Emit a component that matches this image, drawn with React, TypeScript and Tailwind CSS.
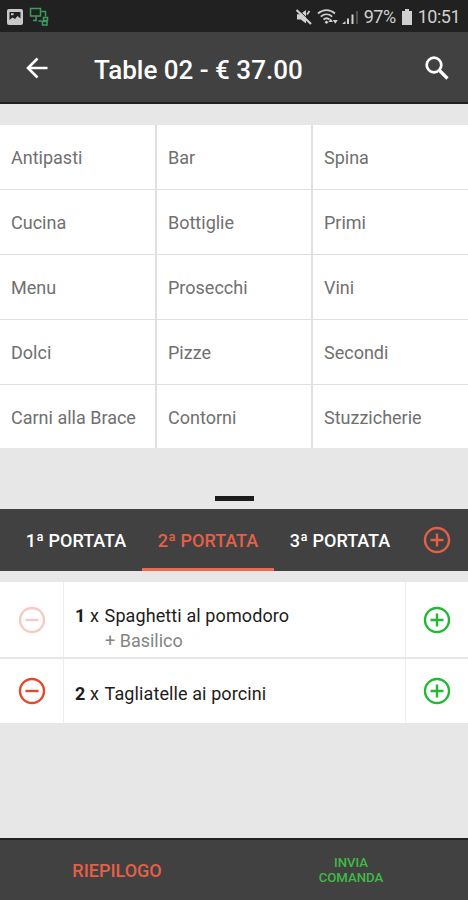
import React, { useState } from 'react';

const CATEGORIES = [
  'Antipasti', 'Bar', 'Spina',
  'Cucina', 'Bottiglie', 'Primi',
  'Menu', 'Prosecchi', 'Vini',
  'Dolci', 'Pizze', 'Secondi',
  'Carni alla Brace', 'Contorni', 'Stuzzicherie',
];

const COURSES = ['1ª PORTATA', '2ª PORTATA', '3ª PORTATA'];

interface OrderItem {
  id: number;
  quantity: number;
  name: string;
  extra?: string;
  locked?: boolean;
}

const ORDER_ITEMS: OrderItem[] = [
  { id: 1, quantity: 1, name: 'Spaghetti al pomodoro', extra: '+ Basilico', locked: true },
  { id: 2, quantity: 2, name: 'Tagliatelle ai porcini' },
];

const CircleIcon: React.FC<{ plus?: boolean; className?: string }> = ({ plus, className }) => (
  <svg viewBox="0 0 28 28" fill="none" stroke="currentColor" strokeWidth="2.4" className={`w-7 h-7 ${className ?? ''}`}>
    <circle cx="14" cy="14" r="12" />
    <path d={plus ? 'M7.5 14h13M14 7.5v13' : 'M7.5 14h13'} />
  </svg>
);

const StatusBar = () => (
  <div className="h-8 bg-[#212121] flex items-center justify-between pl-[7px] pr-2 pt-0.5 text-[#cfcfcf]">
    <div className="flex items-center gap-1.5">
      <svg viewBox="0 0 16 16" className="w-4 h-4">
        <rect width="16" height="16" rx="2" fill="#c8c8c8" />
        <path d="M2.5 3h11v6.5L10.5 7 8 10 5.5 8.5l-3 2.5z" fill="#212121" />
        <path d="M4 4.2h2.6v2H4z" fill="#c8c8c8" />
      </svg>
      <svg viewBox="0 0 20 20" fill="none" stroke="#3f9a60" strokeWidth="1.5" className="w-5 h-5">
        <path d="M1.5 1.5h10V9h-10zM7 9v4.500M4 13.500h4M12.500 4.500h4v5M9.500 14h3.500" />
        <path d="M14.500 10.500h4v3h-4zM13.500 14.500h4.500v3.500h-4.500z" />
      </svg>
    </div>
    <div className="flex items-center">
      <svg viewBox="0 0 16 16" className="w-4 h-4 mr-[5px]">
        <path d="M1 5.2h3.2L10 1v13.5L4.8 10.5H1z" fill="currentColor" />
        <path d="M11 5.500l2.500-3.500" stroke="currentColor" strokeWidth="1.8" />
        <path d="M1.800 0L16 14" stroke="#212121" strokeWidth="1" />
        <path d="M.5 1L15 15" stroke="currentColor" strokeWidth="2.200" />
      </svg>
      <svg viewBox="0 0 22 16" fill="none" stroke="currentColor" strokeWidth="1.8" className="w-[22px] h-4 mr-0.5">
        <path d="M1 4.5C6 0 13 0 18 4.5M3.8 7.6c3.4-3 8-3 11.4 0M6.5 10.5c1.9-1.6 4.1-1.6 6 0" />
        <path d="M9.5 11.5l2 1.7L9.500 15l-2-1.800z" fill="currentColor" stroke="none" />
        <path d="M11.5 13l2.200-3.500 2.300 3.500zM15.800 11h5l-2.500 3.700z" fill="currentColor" stroke="none" />
      </svg>
      <svg viewBox="0 0 18 16" className="w-[18px] h-4 mr-[5px]">
        <path d="M1 15l3.500-3v3zM6 9.500h2V15H6zM10.500 5.500h2V15h-2z" fill="currentColor" />
        <path d="M15 2h2v13h-2z" fill="#505050" />
      </svg>
      <span className="text-[18px] leading-5 tracking-[-0.5px] mr-[6px]">97%</span>
      <svg viewBox="0 0 10 16" className="w-2.5 h-4 mr-[6px]">
        <path d="M3 0h4v2h3v14H0V2h3z" fill="currentColor" />
      </svg>
      <span className="text-[18px] leading-5 tracking-[-0.5px]">10:51</span>
    </div>
  </div>
);

const App: React.FC = () => {
  const [activeCourse, setActiveCourse] = useState(1);

  return (
    <div className="w-[468px] h-[900px] flex flex-col bg-[#e7e7e7] overflow-hidden font-['Roboto',sans-serif]">
      <StatusBar />

      <header className="h-[72px] bg-[#414141] border-b-2 border-[#1f1f1f] flex items-center pt-0.5 pl-[26px] pr-[19px] text-white">
        <button type="button" aria-label="Back">
          <svg viewBox="0 0 22 22" fill="none" stroke="currentColor" strokeWidth="2.6" className="w-[22px] h-[22px]">
            <path d="M21.5 11H2.5M11.5 1.5L2 11l9.5 9.5" />
          </svg>
        </button>
        <h1 className="flex-1 pl-[46px] pt-[5px] text-[26px] font-medium">Table 02 - € 37.00</h1>
        <button type="button" aria-label="Search">
          <svg viewBox="0 0 24 24" fill="none" stroke="currentColor" strokeWidth="2.7" className="w-6 h-6">
            <circle cx="9" cy="9" r="7.3" />
            <path d="M14 14l8.5 8.5" strokeWidth="3.2" />
          </svg>
        </button>
      </header>

      {/* Categories */}
      <div className="mt-[21px] h-[323px] grid grid-cols-[155px_154px_155px] auto-rows-[64px] gap-x-0.5 gap-y-px bg-[#dfdfdf] overflow-hidden">
        {CATEGORIES.map((category) => (
          <button type="button" key={category} className="bg-white pl-[11px] text-left text-[18px] text-[#707070]">
            {category}
          </button>
        ))}
      </div>

      <div className="h-[61px] pb-2 flex items-end justify-center">
        <div className="w-[39px] h-[5px] bg-[#1c1c1c]" />
      </div>

      {/* Courses */}
      <nav className="h-[62px] bg-[#414141] flex items-stretch pl-[10px]">
        {COURSES.map((course, index) => (
          <button
            type="button"
            key={course}
            onClick={() => setActiveCourse(index)}
            className={`w-[132px] border-b-3 pt-1 text-[18px] font-medium ${index === activeCourse ? 'border-[#f0694f] text-[#e65f47]' : 'border-transparent text-white'}`}
          >
            {course}
          </button>
        ))}
        <button type="button" aria-label="Add course" className="pl-[17px] text-[#e65f47]">
          <CircleIcon plus />
        </button>
      </nav>

      {/* Order */}
      <div className="mt-[11px] flex flex-col gap-0.5 bg-[#e7e7e7]">
        {ORDER_ITEMS.map((item) => (
          <div key={item.id} className={`flex gap-px bg-[#eeeeee] ${item.extra ? 'h-[75px]' : 'h-[64px]'}`}>
            <button type="button" aria-label="Remove" className="w-[63px] bg-white flex items-center justify-center">
              <CircleIcon className={item.locked ? 'text-[#f8c9c2]' : 'text-[#e4472b]'} />
            </button>
            <div className={`flex-1 bg-white pl-[11px] text-[18px] leading-[25px] text-[#1c1c1c] ${item.extra ? 'pt-[21px]' : 'pt-[22px]'}`}>
              <p className="tracking-[0.1px]"><span className="font-bold">{item.quantity}</span> x <span className="pl-px">{item.name}</span></p>
              {item.extra && <p className="pl-[30px] text-[#858585]">{item.extra}</p>}
            </div>
            <button type="button" aria-label="Add" className="w-[62px] bg-white flex items-center justify-center">
              <CircleIcon plus className="text-[#1fb932]" />
            </button>
          </div>
        ))}
      </div>

      <footer className="mt-auto h-[62px] bg-[#414141] border-t-2 border-[#222] grid grid-cols-2 font-medium">
        <button type="button" className="text-[18px] text-[#e65f47]">RIEPILOGO</button>
        <button type="button" className="text-[13.2px] leading-[15px] text-[#3fba46]">INVIA<br />COMANDA</button>
      </footer>
    </div>
  );
};

export default App;
